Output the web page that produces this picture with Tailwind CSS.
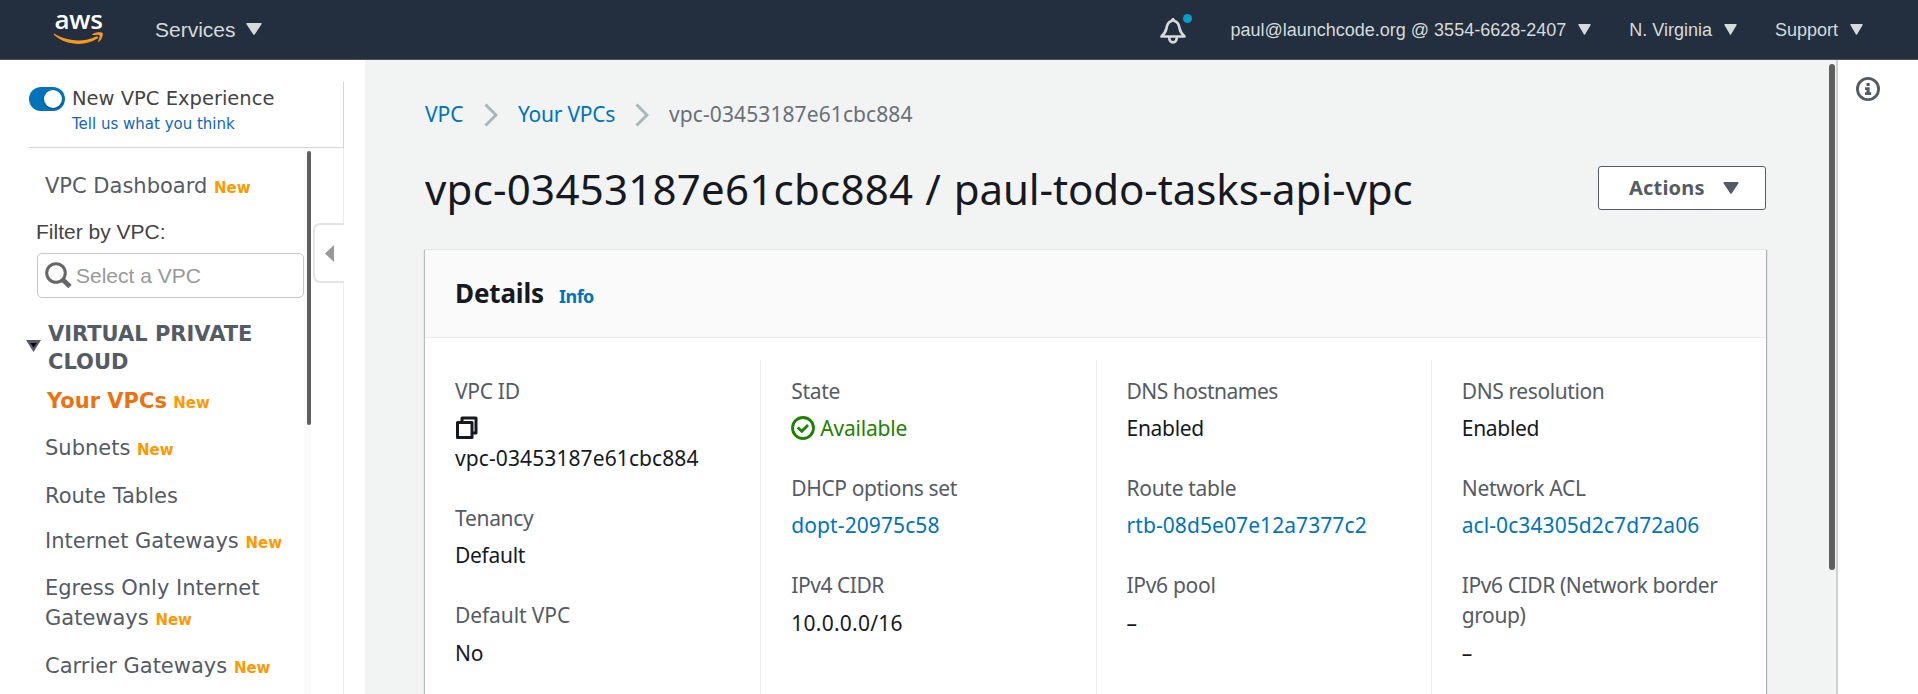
<!DOCTYPE html>
<html lang="en">
<head>
<meta charset="utf-8">
<title>VPC Management Console</title>
<script src="https://cdn.jsdelivr.net/npm/@tailwindcss/browser@4"></script>
</head>
<body class="h-[694px] w-[1918px] overflow-hidden bg-white font-['Noto_Sans',sans-serif] flex flex-col">

<header class="h-[60px] shrink-0 bg-[#232f3e] border-b border-[#4a535e] flex items-center justify-between pl-[53px] pr-[55px] font-['Liberation_Sans',sans-serif] text-[#d5dbdb]">
  <div class="flex items-center">
    <div class="w-[51px] h-[59px] flex flex-col items-center pt-[5px]">
      <span class="font-['Open_Sans',sans-serif] font-semibold text-white text-[26px] leading-[29px] tracking-[-0.3px]">aws</span>
      <svg class="-mt-[2px]" width="51" height="14" viewBox="0 0 51 14" fill="#f7981f"><path d="M1.3 1.8C15 10 31 10.500 43 4.600C44.700 3.900 46 5.400 44.500 6.600C32 14.800 13 13.500 1.100 3C.5 2.200.7 1.500 1.300 1.800Z"/><path d="M39.500 2.200C42 .3 48.500-.3 49.600 1.100C50.600 2.700 48.600 7.500 46 9.800C45.300 10.300 44.900 10 45.200 9.200C46.200 6.900 47 4 46.400 3.200C45.600 2.300 42.500 2.800 40 3.100C39.200 3.200 38.900 2.700 39.500 2.200Z"/></svg>
    </div>
    <span class="ml-[51px] text-[21px] leading-6">Services</span>
    <svg class="ml-[10px] mb-px" width="16" height="12" viewBox="0 0 16 12" fill="currentColor"><path d="M1 0H15Q16 .5 15.500 1.200L8.700 11.400Q8 12 7.300 11.400L.5 1.200Q0 .5 1 0Z"/></svg>
  </div>
  <div class="flex items-center text-[18px] leading-6">
    <div class="relative w-[32px] h-[32px] mr-[40px]">
      <svg class="-mt-px" width="32" height="32" viewBox="0 0 32 32" fill="none" stroke="currentColor" stroke-width="2.700" stroke-linejoin="round" stroke-linecap="round"><path d="M3.500 23.500H26.500C24 21 22.200 19 21.600 15.500C21 11.500 19.500 8.800 16.400 8L15 6.200L13.600 8C10.500 8.800 9 11.500 8.400 15.500C7.800 19 6 21 3.500 23.500Z"/><path d="M11.200 24.500C11.500 31 18.500 31 18.800 24.500"/></svg>
      <span class="absolute left-[25px] top-0 size-[9px] rounded-full bg-[#00a1c9]"></span>
    </div>
    <span>paul@launchcode.org @ 3554-6628-2407</span>
    <svg class="ml-[12px]" width="13" height="11" viewBox="0 0 13 11" fill="currentColor"><path d="M.8 0H12.200Q13 .4 12.500 1.200L7 10.500Q6.500 11 6 10.500L.5 1.200Q0 .4.8 0Z"/></svg>
    <span class="ml-[38px]">N. Virginia</span>
    <svg class="ml-[12px]" width="13" height="11" viewBox="0 0 13 11" fill="currentColor"><path d="M.8 0H12.200Q13 .4 12.500 1.200L7 10.500Q6.500 11 6 10.500L.5 1.200Q0 .4.8 0Z"/></svg>
    <span class="ml-[38px]">Support</span>
    <svg class="ml-[12px]" width="13" height="11" viewBox="0 0 13 11" fill="currentColor"><path d="M.8 0H12.200Q13 .4 12.500 1.200L7 10.500Q6.500 11 6 10.500L.5 1.200Q0 .4.8 0Z"/></svg>
  </div>
</header>

<div class="flex flex-1 min-h-0">
  <aside class="w-[365px] shrink-0 flex flex-col font-['DejaVu_Sans',sans-serif] text-[#545b64]">
    <div class="mt-[22px] ml-[29px] w-[315px] h-[66px] shrink-0 border-r border-b border-[#d5d5d5] flex">
      <div class="mt-[5px] w-[36px] h-[24px] rounded-full bg-[#0073bb] flex items-center justify-end pr-[3px]"><span class="size-[18px] rounded-full bg-white shadow-[0_1px_2px_rgba(0,0,0,0.4)]"></span></div>
      <div class="ml-[7px] mt-[4px] flex flex-col">
        <span class="text-[19.5px] leading-[26px] text-[#444] whitespace-nowrap">New VPC Experience</span>
        <span class="text-[15px] leading-[24px] text-[#1166bb]">Tell us what you think</span>
      </div>
    </div>
    <div class="flex flex-1 min-h-0 ml-[26px]">
      <nav class="w-[278px] shrink-0 pt-[23px] pl-[19px] text-[21px] leading-[30px]">
        <p>VPC Dashboard <b class="text-[15px] leading-none text-[#ff9900]">New</b></p>
        <div class="-ml-[9px] mt-[19px] font-['Liberation_Sans',sans-serif]">
          <p class="leading-6 text-[#444]">Filter by VPC:</p>
          <div class="ml-px mt-[9px] w-[267px] h-[45px] border border-[#c8c8c8] rounded-[5px] flex items-center pl-[7px]">
            <svg width="27" height="27" viewBox="0 0 27 27" fill="none" stroke="#666"><circle cx="11" cy="11" r="9.300" stroke-width="3"/><path d="M17.500 17.500L25 24.500" stroke-width="4.800"/></svg>
            <span class="ml-[4px] text-[#999]">Select a VPC</span>
          </div>
        </div>
        <div class="mt-[22px] -ml-[19px] flex items-start">
          <svg class="mt-[20px] shrink-0" width="15" height="12" viewBox="0 0 15 12"><path d="M0 0H15L7.500 12Z" fill="#545b64"/><path d="M4.300 3H10.700L7.500 7.500Z" fill="#000"/></svg>
          <b class="ml-[7px] w-[230px] leading-[28px]">VIRTUAL PRIVATE CLOUD</b>
        </div>
        <p class="mt-[10px] pl-[2px] font-bold text-[#ec7211]">Your VPCs <b class="-ml-px text-[15px] leading-none text-[#ff9900]">New</b></p>
        <p class="mt-[17px]">Subnets <b class="text-[15px] leading-none text-[#ff9900]">New</b></p>
        <p class="mt-[18px]">Route Tables</p>
        <p class="mt-[15px]">Internet Gateways <b class="text-[15px] leading-none text-[#ff9900]">New</b></p>
        <div class="mt-[17px]"><p>Egress Only Internet</p><p>Gateways <b class="text-[15px] leading-none text-[#ff9900]">New</b></p></div>
        <p class="mt-[18px]">Carrier Gateways <b class="text-[15px] leading-none text-[#ff9900]">New</b></p>
      </nav>
      <div class="w-[7px] bg-[#fafafa] pl-[3px] pt-[3px]"><div class="w-[4px] h-[274px] rounded-full bg-[#5f5f5f]"></div></div>
      <div class="w-[33px] border-r border-[#ebebeb] pt-[75px] pl-[2px]">
        <div class="w-[31px] h-[60px] border-2 border-r-0 border-[#e4e4e4] rounded-l-[7px] bg-white flex items-center pl-[10px]">
          <svg width="9" height="17" viewBox="0 0 9 17"><path d="M9 0V17L0 8.500Z" fill="#999"/></svg>
        </div>
      </div>
    </div>
  </aside>

  <main class="flex-1 min-w-0 bg-[#f2f3f3] flex justify-between border-r-2 border-[#cdd1d1]">
    <div class="ml-[60px] w-[1341px] flex flex-col">
      <nav class="mt-[39px] h-[30px] flex items-center text-[21px] leading-[30px] text-[#0073bb]">
        <span class="w-[59px]">VPC</span>
        <svg class="mt-px" width="14" height="24" viewBox="0 0 14 24" fill="none" stroke="#aab7b8" stroke-width="3"><path d="M1.500 1.500L12 12L1.500 22.500"/></svg>
        <span class="ml-[20px] w-[117px] tracking-[-0.25px]">Your VPCs</span>
        <svg class="mt-px" width="14" height="24" viewBox="0 0 14 24" fill="none" stroke="#aab7b8" stroke-width="3"><path d="M1.500 1.500L12 12L1.500 22.500"/></svg>
        <span class="ml-[20px] text-[#687078] tracking-[0.1px]">vpc-03453187e61cbc884</span>
      </nav>
      <div class="mt-[31px] h-[60px] flex items-center justify-between">
        <h1 class="-mt-[3px] text-[42px] leading-[60px] text-[#16191f] whitespace-nowrap"><span class="tracking-[0.25px]">vpc-03453187e61cbc884</span><span class="tracking-[1px]"> / </span><span class="tracking-[-0.1px]">paul-todo-tasks-api-vpc</span></h1>
        <button class="mt-[-4px] w-[168px] h-[44px] bg-white border border-[#545b64] rounded-[3px] flex items-center pl-[30px] font-bold text-[20px] text-[#545b64] tracking-[0.2px]">Actions
          <svg class="ml-[18px]" width="16" height="12" viewBox="0 0 16 12" fill="currentColor"><path d="M1 0H15Q16 .5 15.500 1.200L8.700 11.400Q8 12 7.300 11.400L.5 1.200Q0 .5 1 0Z"/></svg>
        </button>
      </div>
      <section class="mt-[29px] flex-1 flex flex-col bg-white border-t border-[#e3e7e7] shadow-[1px_1px_1px_0_rgba(0,28,36,0.3),-1px_1px_1px_0_rgba(0,28,36,0.25)]">
        <div class="h-[88px] shrink-0 bg-[#fafafa] border-b border-[#eaeded] flex items-baseline pl-[30px] pt-[23px]">
          <h2 class="text-[26px] leading-[40px] font-bold text-[#16191f] tracking-[-0.15px]">Details</h2>
          <b class="ml-[15px] text-[18px] leading-none text-[#0073bb] tracking-[-0.5px]">Info</b>
        </div>
        <div class="mt-[22px] flex-1 grid grid-cols-4 text-[21px] leading-[30px] text-[#16191f] tracking-[-0.3px]">
          <dl class="pt-[16px] pl-[30px]">
            <dt class="text-[#545b64]">VPC ID</dt>
            <dd class="mt-[7px] tracking-[0.1px]">
              <svg class="h-[30px]" width="23" height="30" viewBox="0 0 23 30" fill="none" stroke="#16191f" stroke-width="3" stroke-linejoin="round"><path d="M7 9V5H21V20H17"/><rect x="2.500" y="9.500" width="14.500" height="15"/></svg>
              vpc-03453187e61cbc884</dd>
            <dt class="mt-[30px] text-[#545b64]">Tenancy</dt>
            <dd class="mt-[7px]">Default</dd>
            <dt class="mt-[30px] text-[#545b64] tracking-[-0.1px]">Default VPC</dt>
            <dd class="mt-[8px]">No</dd>
          </dl>
          <dl class="pt-[16px] pl-[30px] border-l border-[#eaeded]">
            <dt class="text-[#545b64]">State</dt>
            <dd class="mt-[7px] flex items-center text-[#1d8102]">
              <svg class="mr-[5px]" width="24" height="24" viewBox="0 0 24 24" fill="none" stroke="currentColor" stroke-width="2.800"><circle cx="12" cy="12" r="10.500"/><path d="M6.700 11.500L10.800 15.300L17 9"/></svg>
              <span class="tracking-[-0.2px]">Available</span></dd>
            <dt class="mt-[30px] text-[#545b64] tracking-[-0.37px]">DHCP options set</dt>
            <dd class="mt-[7px] text-[#0073bb] tracking-[0.1px]">dopt-20975c58</dd>
            <dt class="mt-[30px] text-[#545b64] tracking-[-0.45px]">IPv4 CIDR</dt>
            <dd class="mt-[8px] tracking-[0.25px]">10.0.0.0/16</dd>
          </dl>
          <dl class="pt-[16px] pl-[30px] border-l border-[#eaeded]">
            <dt class="text-[#545b64] tracking-[-0.5px]">DNS hostnames</dt>
            <dd class="mt-[7px]">Enabled</dd>
            <dt class="mt-[30px] text-[#545b64]">Route table</dt>
            <dd class="mt-[7px] text-[#0073bb] tracking-[0.08px]">rtb-08d5e07e12a7377c2</dd>
            <dt class="mt-[30px] text-[#545b64]">IPv6 pool</dt>
            <dd class="mt-[8px]">–</dd>
          </dl>
          <dl class="pt-[16px] pl-[30px] pr-[30px] border-l border-[#eaeded]">
            <dt class="text-[#545b64] tracking-[-0.4px]">DNS resolution</dt>
            <dd class="mt-[7px]">Enabled</dd>
            <dt class="mt-[30px] text-[#545b64]">Network ACL</dt>
            <dd class="mt-[7px] text-[#0073bb] tracking-[0.08px]">acl-0c34305d2c7d72a06</dd>
            <dt class="mt-[30px] text-[#545b64] tracking-[-0.4px]">IPv6 CIDR (Network border group)</dt>
            <dd class="mt-[8px]">–</dd>
          </dl>
        </div>
      </section>
    </div>
    <div class="mt-[4px] mr-px w-[6px] h-[506px] rounded-full bg-[#5f5f5f]"></div>
  </main>

  <aside class="w-[80px] shrink-0 bg-white pt-[17px] pl-[18px]">
    <svg width="24" height="24" viewBox="0 0 24 24" fill="none"><circle cx="12" cy="12" r="10.600" stroke="#545b64" stroke-width="2.800"/><path d="M10.500 6H13.700V9H10.500ZM9 10.300H13.700V15.300H15.200V18H9V15.300H10.500V13H9Z" fill="#545b64"/></svg>
  </aside>
</div>
</body>
</html>
